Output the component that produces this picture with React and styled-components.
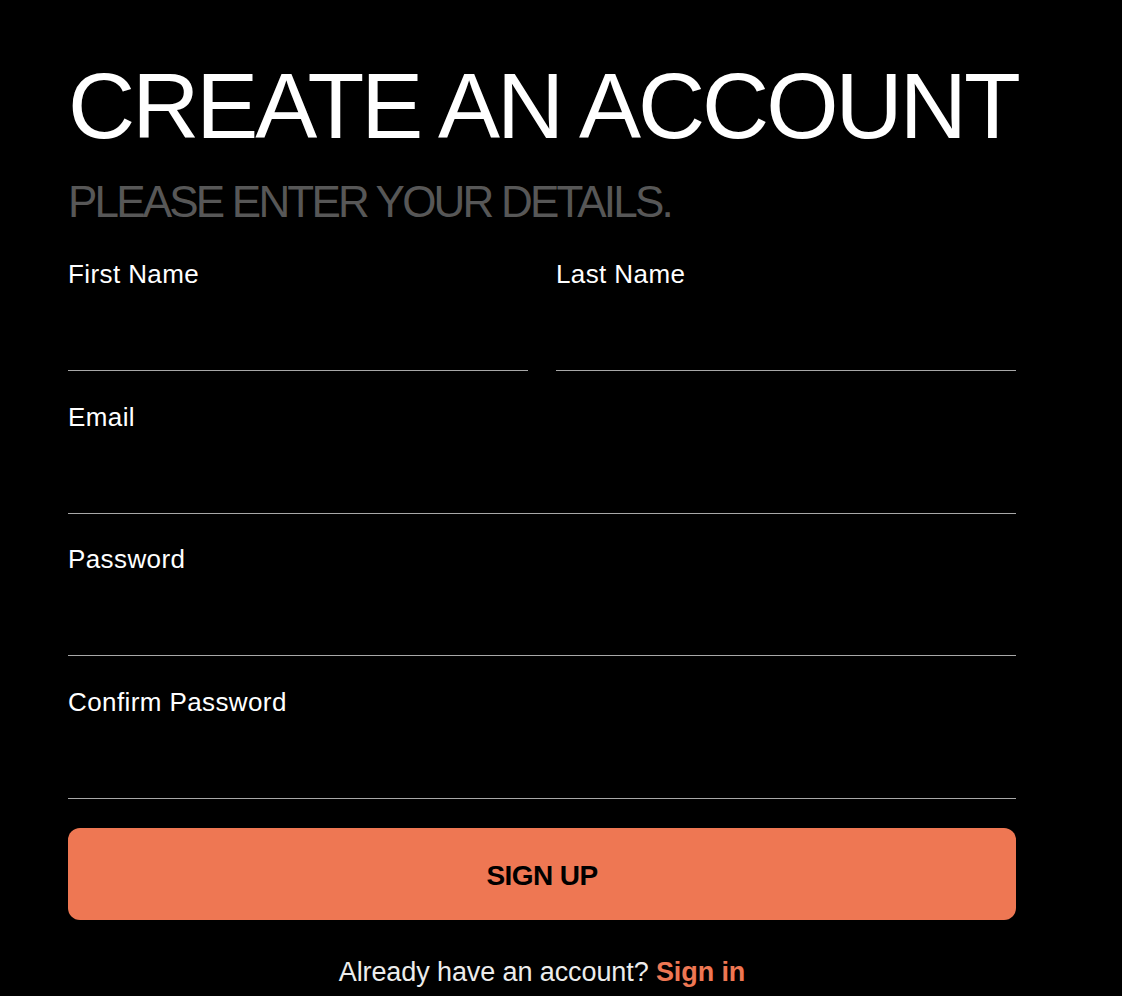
import React from 'react'
import styled, { createGlobalStyle } from 'styled-components'

const GlobalStyle = createGlobalStyle`
  html, body {
    margin: 0;
    padding: 0;
    background: #000000;
  }
  body {
    font-family: 'Liberation Sans', Arial, sans-serif;
    color: #ffffff;
  }
  * {
    box-sizing: border-box;
  }
`

const Page = styled.div`
  min-height: 996px;
  background: #000000;
  padding: 60px 0 0 68px;
`

const Form = styled.form`
  width: 948px;
  display: flex;
  flex-direction: column;
`

const Title = styled.h1`
  margin: 0;
  font-size: 93px;
  line-height: 1;
  font-weight: 400;
  letter-spacing: -3px;
  color: #ffffff;
  white-space: nowrap;
`

const Subtitle = styled.p`
  margin: 27px 0 0;
  font-size: 44px;
  line-height: 1;
  font-weight: 400;
  letter-spacing: -2.8px;
  color: #575757;
  text-transform: uppercase;
  white-space: nowrap;
`

const Fields = styled.div`
  margin-top: 37px;
  display: flex;
  flex-direction: column;
  gap: 32.6px;
`

const Row = styled.div`
  display: grid;
  grid-template-columns: 1fr 1fr;
  column-gap: 28px;
`

const Field = styled.label`
  display: flex;
  flex-direction: column;
`

const LabelText = styled.span`
  font-size: 26px;
  line-height: 1;
  color: #ffffff;
  letter-spacing: 0.4px;
`

const Input = styled.input`
  height: 84px;
  width: 100%;
  background: transparent;
  border: none;
  border-bottom: 1px solid #a8a8a8;
  outline: none;
  color: #ffffff;
  font-family: inherit;
  font-size: 24px;
  padding: 0;
`

const SubmitButton = styled.button`
  margin-top: 29px;
  height: 92px;
  width: 100%;
  padding: 4px 0 0;
  border: none;
  border-radius: 12px;
  background: #ee7753;
  color: #000000;
  font-family: 'Liberation Sans', Arial, sans-serif;
  font-size: 28px;
  font-weight: 700;
  letter-spacing: -0.6px;
  cursor: pointer;
`

const Footer = styled.p`
  margin: 39px 0 0;
  text-align: center;
  font-size: 27px;
  line-height: 1;
  color: #ececec;
  letter-spacing: -0.1px;
`

const SignInLink = styled.a`
  color: #ee7753;
  font-weight: 700;
  text-decoration: none;
`

const FormField = ({ label, type = 'text' }) => (
  <Field>
    <LabelText>{label}</LabelText>
    <Input type={type} />
  </Field>
)

const App = () => {
  return (
    <Page>
      <GlobalStyle />
      <Form onSubmit={(e) => e.preventDefault()}>
        <Title>CREATE AN ACCOUNT</Title>
        <Subtitle>Please enter your details.</Subtitle>
        <Fields>
          <Row>
            <FormField label='First Name' />
            <FormField label='Last Name' />
          </Row>
          <FormField label='Email' type='email' />
          <FormField label='Password' type='password' />
          <FormField label='Confirm Password' type='password' />
        </Fields>
        <SubmitButton type='submit'>SIGN UP</SubmitButton>
        <Footer>
          Already have an account? <SignInLink href='#'>Sign in</SignInLink>
        </Footer>
      </Form>
    </Page>
  )
}

export default App
